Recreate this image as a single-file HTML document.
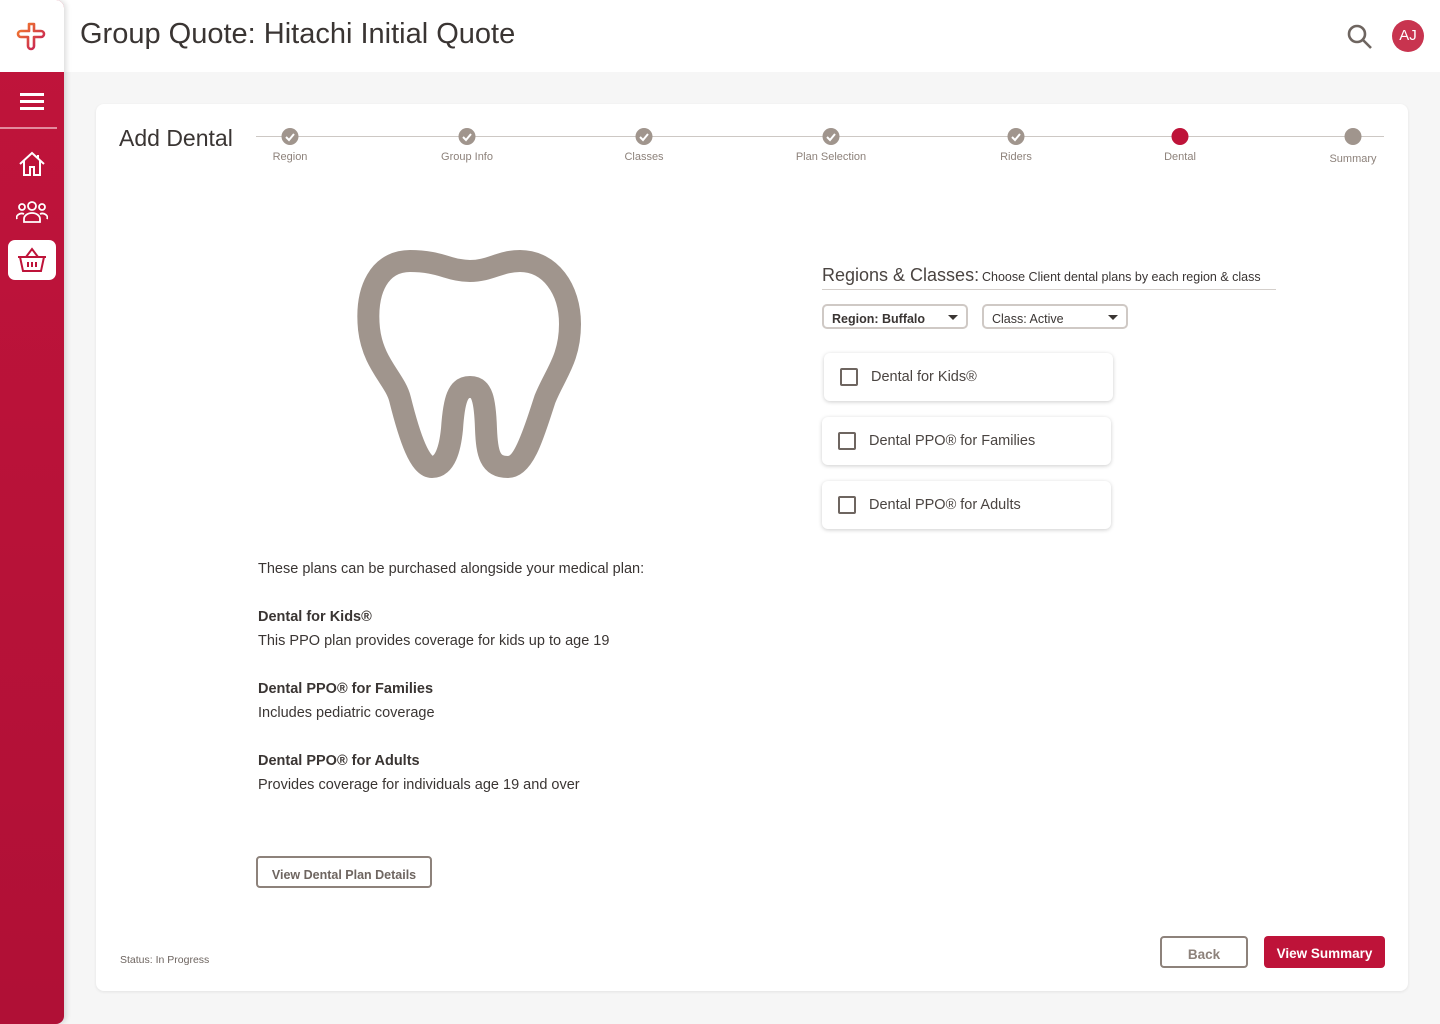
<!DOCTYPE html>
<html><head><meta charset="utf-8"><style>
*{box-sizing:border-box;margin:0;padding:0}
body{width:1440px;height:1024px;background:#f6f6f6;font-family:"Liberation Sans",sans-serif;color:#3a3533;position:relative;overflow:hidden}
.top{position:absolute;left:0;top:0;width:1440px;height:72px;background:#fff}
.side{position:absolute;left:0;top:0;width:64px;height:1024px;background:linear-gradient(#c0143b,#b01036);border-radius:0 8px 8px 0;box-shadow:2px 0 6px rgba(0,0,0,.15)}
.logo{position:absolute;left:0;top:0;width:64px;height:72px;background:#fff;border-radius:0 8px 0 0}
.abs{position:absolute}
.card{position:absolute;left:96px;top:104px;width:1312px;height:887px;background:#fff;border-radius:8px;box-shadow:0 1px 3px rgba(0,0,0,.08)}
.step{position:absolute;top:151px;font-size:11px;color:#8d827b;transform:translateX(-50%);white-space:nowrap}
.dot{position:absolute;top:128px;width:17px;height:17px;border-radius:50%;background:#a0958d;transform:translateX(-50%)}
.chk{position:absolute;left:822px;width:289px;height:48px;background:#fff;border-radius:6px;box-shadow:0 1px 4px rgba(0,0,0,.2);font-size:14.5px;color:#4a4441}
.chk i{position:absolute;left:16px;top:15px;width:18px;height:18px;border:2px solid #6e6560;border-radius:2px}
.chk span{position:absolute;left:47px;top:16px}
.sel{position:absolute;top:304px;height:25px;border:2px solid #cfc9c5;border-radius:5px;font-size:12.5px;font-weight:bold;color:#3a3533;padding:6px 0 0 8px}
.sel:after{content:"";position:absolute;right:8px;top:9px;border:5px solid transparent;border-top:5px solid #3a3533;border-bottom:0}
.t{position:absolute;left:258px;font-size:14.5px;color:#3a3533}
</style></head><body>
<div class="top"></div>
<div class="side"></div>
<div class="logo"></div>
<svg class="abs" style="left:16px;top:21px" width="32" height="30" viewBox="0 0 32 30"><defs><linearGradient id="g" x1="0" y1="0" x2="1" y2="1"><stop offset="0" stop-color="#f5812a"/><stop offset="1" stop-color="#c0145a"/></linearGradient></defs><path d="M13 3h5v7h7a3 3 0 0 1 0 6h-7v9a3 3 0 0 1-6 0v-9H5a3 3 0 0 1 0-6h8z" fill="none" stroke="url(#g)" stroke-width="2.6" stroke-linejoin="round"/></svg>
<div class="abs" style="left:20px;top:93px;width:24px;height:3px;background:#fff;box-shadow:0 7px 0 #fff,0 14px 0 #fff"></div>
<div class="abs" style="left:0;top:127px;width:57px;height:2px;background:#e38a9d"></div>
<svg class="abs" style="left:18px;top:150px" width="28" height="28" viewBox="0 0 28 28" fill="none" stroke="#fff" stroke-width="2"><path d="M2 14L14 3l12 11M6 11v14h6v-8h4v8h6V11M20 5v4"/></svg>
<svg class="abs" style="left:16px;top:200px" width="32" height="24" viewBox="0 0 32 24" fill="none" stroke="#fff" stroke-width="1.8"><circle cx="16" cy="6" r="4"/><circle cx="6" cy="7" r="3"/><circle cx="26" cy="7" r="3"/><path d="M8 22v-3a8 6 0 0 1 16 0v3zM1 19a5 4 0 0 1 7-5M31 19a5 4 0 0 0-7-5"/></svg>
<div class="abs" style="left:8px;top:240px;width:48px;height:40px;background:#fff;border-radius:7px"></div>
<svg class="abs" style="left:16px;top:246px" width="32" height="28" viewBox="0 0 32 28" fill="none" stroke="#be1339" stroke-width="2"><path d="M2 11h28M4 11l3 14h18l3-14M10 11l6-8 6 8M12 16v5M16 16v5M20 16v5"/></svg>
<div class="abs" style="left:80px;top:18px;font-size:29px;color:#3a3533">Group Quote: Hitachi Initial Quote</div>
<svg class="abs" style="left:1346px;top:23px" width="28" height="28" viewBox="0 0 28 28" fill="none" stroke="#6e6560" stroke-width="2.6"><circle cx="11" cy="11" r="8"/><path d="M17 17l8 8"/></svg>
<div class="abs" style="left:1392px;top:20px;width:32px;height:32px;border-radius:50%;background:#c8344f;color:#fff;font-size:15px;text-align:center;line-height:32px">AJ</div>
<div class="card"></div>
<div class="abs" style="left:119px;top:125px;font-size:23px;color:#3a3533">Add Dental</div>
<div class="abs" style="left:256px;top:136px;width:1128px;height:1px;background:#cdc8c4"></div>
<div class="dot" style="left:290px"></div><div class="dot" style="left:467px"></div><div class="dot" style="left:644px"></div><div class="dot" style="left:831px"></div><div class="dot" style="left:1016px"></div>
<div class="dot" style="left:1180px;background:#be1339;top:128px"></div><div class="dot" style="left:1353px"></div>
<svg class="abs" style="left:0;top:0" width="1440" height="160"><g fill="none" stroke="#fff" stroke-width="2"><path d="M286 137l3 3 5-6M463 137l3 3 5-6M640 137l3 3 5-6M827 137l3 3 5-6M1012 137l3 3 5-6"/></g></svg>
<div class="step" style="left:290px">Region</div><div class="step" style="left:467px">Group Info</div><div class="step" style="left:644px">Classes</div><div class="step" style="left:831px">Plan Selection</div><div class="step" style="left:1016px">Riders</div><div class="step" style="left:1180px">Dental</div><div class="step" style="left:1353px;top:153px">Summary</div>
<svg class="abs" style="left:350px;top:251px;overflow:visible" width="240" height="240" viewBox="0 0 240 240"><path d="M120 20C100 20 90 10 60 10 30 10 15 38 19 78 23 113 45 128 50 148 60 188 70 216 82 216 95 216 100 198 102 178 104 148 108 136 120 136 132 136 135 148 136 178 137 203 140 216 158 216 175 216 185 178 195 148 205 123 220 108 220 73 220 38 200 10 170 10 150 10 140 20 120 20Z" fill="none" stroke="#a0958d" stroke-width="22" stroke-linejoin="round"/></svg>
<div class="abs" style="left:822px;top:265px;font-size:18px;color:#4a4441">Regions &amp; Classes:</div>
<div class="abs" style="left:982px;top:270px;font-size:12.5px;color:#3a3533">Choose Client dental plans by each region &amp; class</div>
<div class="abs" style="left:822px;top:289px;width:454px;height:1px;background:#d4cfcb"></div>
<div class="sel" style="left:822px;width:146px">Region: Buffalo</div>
<div class="sel" style="left:982px;width:146px;font-weight:normal">Class: Active</div>
<div class="chk" style="top:353px;left:824px"><i></i><span>Dental for Kids®</span></div>
<div class="chk" style="top:417px"><i></i><span>Dental PPO® for Families</span></div>
<div class="chk" style="top:481px"><i></i><span>Dental PPO® for Adults</span></div>
<div class="t" style="top:561px">These plans can be purchased alongside your medical plan:</div>
<div class="t" style="top:609px;font-weight:bold">Dental for Kids®</div>
<div class="t" style="top:633px">This PPO plan provides coverage for kids up to age 19</div>
<div class="t" style="top:681px;font-weight:bold">Dental PPO® for Families</div>
<div class="t" style="top:705px">Includes pediatric coverage</div>
<div class="t" style="top:753px;font-weight:bold">Dental PPO® for Adults</div>
<div class="t" style="top:777px">Provides coverage for individuals age 19 and over</div>
<div class="abs" style="left:256px;top:856px;width:176px;height:32px;border:2px solid #8d827b;border-radius:4px;font-size:12.5px;font-weight:bold;color:#6e6560;text-align:center;line-height:34px">View Dental Plan Details</div>
<div class="abs" style="left:120px;top:954px;font-size:10.5px;color:#6e6560">Status: In Progress</div>
<div class="abs" style="left:1160px;top:936px;width:88px;height:32px;border:2px solid #8d827b;border-radius:4px;font-size:13.5px;font-weight:bold;color:#8d827b;text-align:center;line-height:34px">Back</div>
<div class="abs" style="left:1264px;top:936px;width:121px;height:32px;background:#be1339;border-radius:4px;font-size:13.5px;font-weight:bold;color:#fff;text-align:center;line-height:36px">View Summary</div>
</body></html>
